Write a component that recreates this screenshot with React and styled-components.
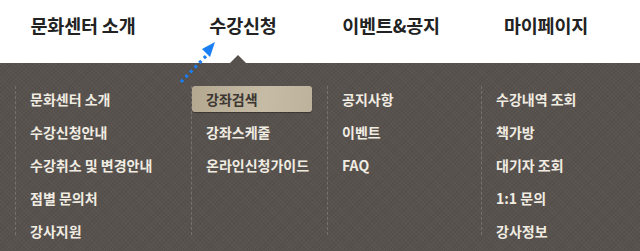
import React from 'react'
import styled, { createGlobalStyle } from 'styled-components'

const GlobalStyle = createGlobalStyle`
  html, body {
    margin: 0;
    padding: 0;
    background: #ffffff;
  }
  body {
    font-family: "Noto Sans CJK KR", "Noto Sans", sans-serif;
  }
`

const nav = [
  { label: '문화센터 소개', width: 166 },
  { label: '수강신청', width: 154, active: true },
  { label: '이벤트&공지', width: 142 },
  { label: '마이페이지', width: 168 },
]

const columns = [
  { width: 175, items: ['문화센터 소개', '수강신청안내', '수강취소 및 변경안내', '점별 문의처', '강사지원'] },
  { width: 135, items: ['강좌검색', '강좌스케줄', '온라인신청가이드'], selected: 0 },
  { width: 153, items: ['공지사항', '이벤트', 'FAQ'] },
  { width: 147, items: ['수강내역 조회', '책가방', '대기자 조회', '1:1 문의', '강사정보'] },
]

function App() {
  return (
    <Page>
      <GlobalStyle />
      <Header>
        {nav.map((n) => (
          <NavItem key={n.label} $w={n.width}>
            {n.label}
            {n.active && <Caret />}
          </NavItem>
        ))}
        <Pointer width="50" height="50" viewBox="0 0 50 50">
          <path d="M6 44 L31 18" stroke="#1a7ff5" strokeWidth="3.2" strokeDasharray="3 3.6" fill="none" />
          <polygon points="40,4 27,11 35,19" fill="#1a7ff5" />
        </Pointer>
      </Header>
      <Panel>
        {columns.map((c, i) => (
          <Column key={i} $w={c.width}>
            {c.items.map((it, j) => (
              <MenuLink key={it} $on={c.selected === j}>{it}</MenuLink>
            ))}
          </Column>
        ))}
      </Panel>
    </Page>
  )
}

export default App

const Page = styled.div`
  width: 640px;
  height: 251px;
  overflow: hidden;
  position: relative;
`

const Header = styled.nav`
  height: 63px;
  display: flex;
  position: relative;
  background: #fff;
`

const NavItem = styled.div`
  width: ${(p) => p.$w}px;
  position: relative;
  display: flex;
  justify-content: center;
  padding-top: 11px;
  font-size: 18.5px;
  font-weight: 700;
  color: #222;
  letter-spacing: -0.2px;
  line-height: 28px;
`

const Caret = styled.span`
  position: absolute;
  left: 64px;
  bottom: 0;
  width: 0;
  height: 0;
  border-left: 8px solid transparent;
  border-right: 8px solid transparent;
  border-bottom: 8px solid #56514d;
`

const Pointer = styled.svg`
  position: absolute;
  left: 175px;
  top: 38px;
  z-index: 2;
`

const Panel = styled.div`
  height: 188px;
  display: flex;
  padding: 23px 0 0 15px;
  box-sizing: border-box;
  background-color: #57524e;
  background-image:
    repeating-linear-gradient(45deg, rgba(255,255,255,0.025) 0 1px, transparent 1px 3px),
    repeating-linear-gradient(-45deg, rgba(0,0,0,0.05) 0 1px, transparent 1px 3px);
`

const Column = styled.ul`
  list-style: none;
  margin: 0;
  padding: 0;
  width: ${(p) => p.$w}px;
  height: 149px;
  border-left: 1px dashed #77716c;
  display: flex;
  flex-direction: column;
  gap: 7px;
`

const MenuLink = styled.li`
  flex-shrink: 0;
  height: 26px;
  display: flex;
  align-items: center;
  padding-left: 14px;
  margin-right: ${(p) => (p.$on ? '15px' : '0')};
  font-size: 14px;
  font-weight: 700;
  color: ${(p) => (p.$on ? '#3c3732' : '#f1ece2')};
  white-space: nowrap;
  border-radius: 3px;
  background: ${(p) => (p.$on ? 'linear-gradient(100deg, #b3a78f 0%, #c6bca6 60%, #bdb29b 100%)' : 'none')};
  box-shadow: ${(p) => (p.$on ? '0 1px 1px rgba(0,0,0,0.35)' : 'none')};
`
